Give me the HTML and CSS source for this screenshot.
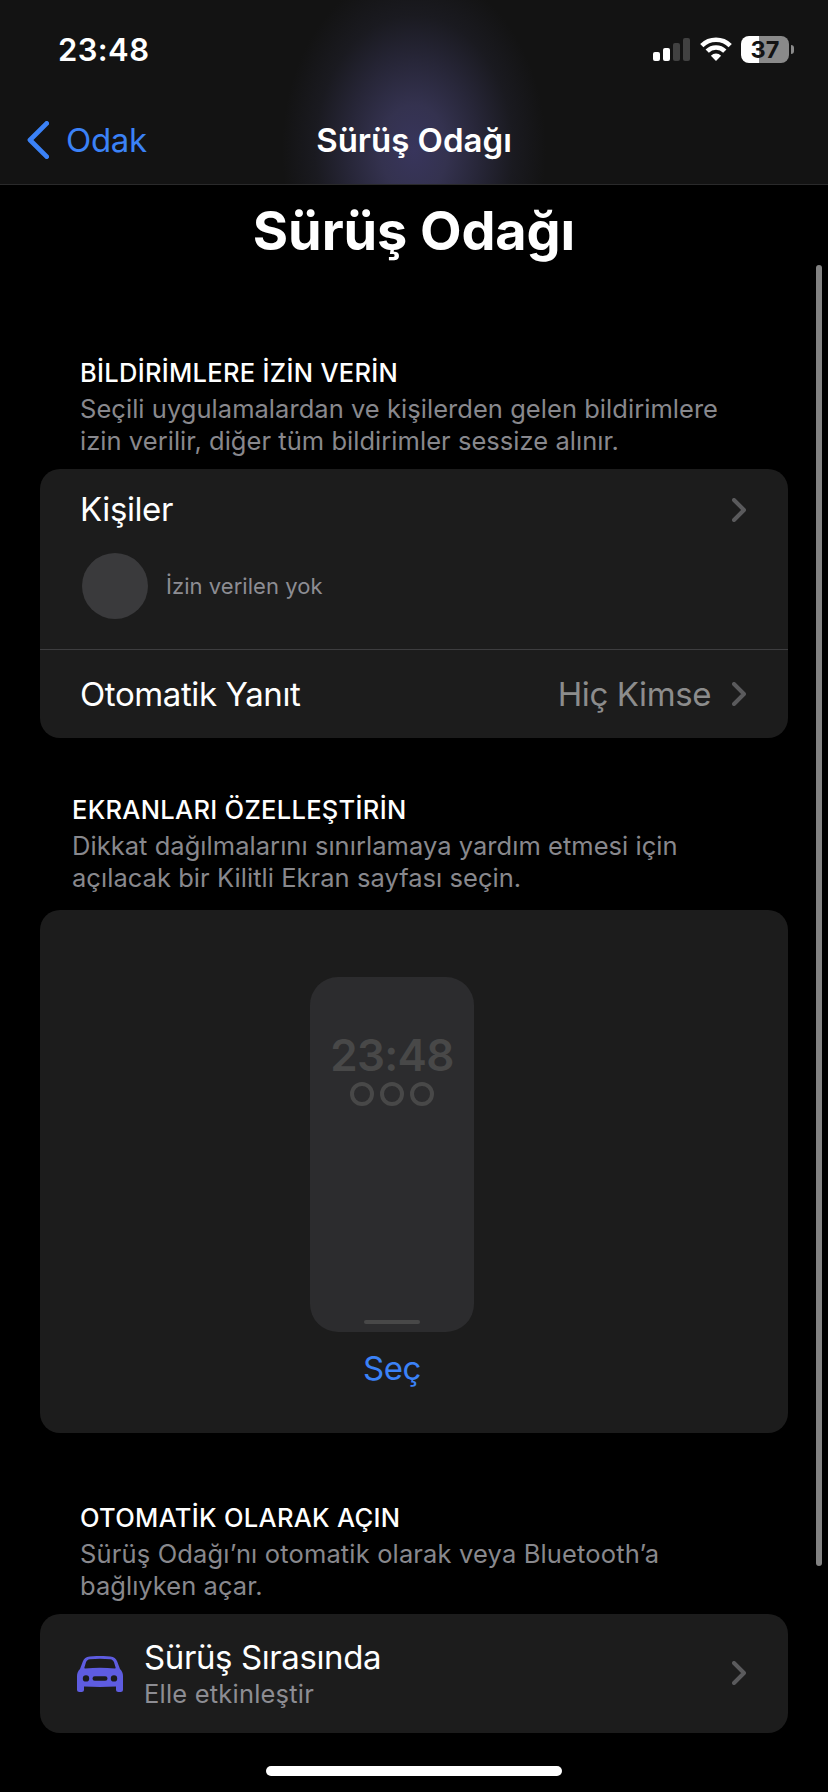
FILE: index.html
```html
<!DOCTYPE html>
<html lang="tr">
<head>
<meta charset="utf-8">
<title>Sürüş Odağı</title>
<link rel="stylesheet" href="styles.css">
</head>
<body>
<header class="topbar">
  <div class="status">
    <span class="time">23:48</span>
    <div class="indicators">
      <svg class="signal" width="38" height="23" viewBox="0 0 38 23">
        <rect x="0" y="14" width="7" height="9" rx="2" fill="#fff"/>
        <rect x="10" y="10" width="7" height="13" rx="2" fill="#fff"/>
        <rect x="20" y="5" width="7" height="18" rx="2" fill="#414141"/>
        <rect x="30" y="0" width="7" height="23" rx="2" fill="#414141"/>
      </svg>
      <svg class="wifi" width="32" height="24" viewBox="0 0 32 24">
        <g fill="none" stroke="#fff" stroke-width="4.6">
          <path d="M1.800 8.600a20.200 20.200 0 0 1 28.400 0"/>
          <path d="M7.200 14.200a12.400 12.400 0 0 1 17.600 0"/>
        </g>
        <path fill="#fff" d="M16 24l-5.100-5.300a7.300 7.300 0 0 1 10.200 0z"/>
      </svg>
      <div class="battery"><span class="level">37</span><span class="cap"></span></div>
    </div>
  </div>
  <nav class="nav">
    <a class="back">
      <svg width="22" height="38" viewBox="0 0 22 38"><path d="M19.700 2.400L3 19l16.700 16.600" fill="none" stroke="#3b82f7" stroke-width="4.8" stroke-linecap="round" stroke-linejoin="round"/></svg>
      <span>Odak</span>
    </a>
    <h2 class="nav-title">Sürüş Odağı</h2>
  </nav>
</header>
<main class="content">
  <h1 class="title">Sürüş Odağı</h1>

  <section class="people">
    <div class="intro">
      <h3>BİLDİRİMLERE İZİN VERİN</h3>
      <p>Seçili uygulamalardan ve kişilerden gelen bildirimlere<br>izin verilir, diğer tüm bildirimler sessize alınır.</p>
    </div>
    <div class="card">
      <div class="contacts">
        <div class="row">
          <span class="label">Kişiler</span>
          <svg class="chevron" width="14" height="24" viewBox="0 0 14 24"><path d="M2 2l10 10L2 22"/></svg>
        </div>
        <div class="allowed"><span class="avatar"></span><span>İzin verilen yok</span></div>
      </div>
      <div class="row reply">
        <span class="label">Otomatik Yanıt</span>
        <span class="value">Hiç Kimse</span>
        <svg class="chevron" width="14" height="24" viewBox="0 0 14 24"><path d="M2 2l10 10L2 22"/></svg>
      </div>
    </div>
  </section>

  <section class="screens">
    <div class="intro">
      <h3>EKRANLARI ÖZELLEŞTİRİN</h3>
      <p>Dikkat dağılmalarını sınırlamaya yardım etmesi için<br>açılacak bir Kilitli Ekran sayfası seçin.</p>
    </div>
    <div class="card preview">
      <div class="phone">
        <span class="clock">23:48</span>
        <div class="widgets"><i></i><i></i><i></i></div>
        <span class="bar"></span>
      </div>
      <a class="choose">Seç</a>
    </div>
  </section>

  <section class="auto">
    <div class="intro">
      <h3>OTOMATİK OLARAK AÇIN</h3>
      <p><span class="wide">Sürüş Odağı’nı otomatik olarak veya Bluetooth’a</span><br>bağlıyken açar.</p>
    </div>
    <div class="card driving">
      <svg class="car" width="46" height="36" viewBox="0 0 46 36">
        <path fill="#5e5ce0" fill-rule="evenodd" d="M12.600.400Q23-.500 33.400.400C37 .700 39 2.500 40.200 5.600L43 13C45 15 46 17.200 46 20V33.500Q46 36 43.500 36H41.500Q39 36 39 33.500V30.600Q23 31.400 7 30.600V33.500Q7 36 4.500 36H2.500Q0 36 0 33.500V20C0 17.200 1 15 3 13L5.800 5.600C7 2.500 9 .700 12.600.400ZM12.800 3.200C10.800 3.400 9.800 4.400 9 6.300L7.400 11.400C7.200 12.200 7.500 12.500 8.200 12.400Q23 11 37.800 12.400C38.500 12.500 38.800 12.200 38.600 11.400L37 6.300C36.200 4.400 35.200 3.400 33.200 3.200Q23 2.400 12.800 3.200ZM9 19.200a3.200 3.200 0 1 0 0 6.400a3.200 3.200 0 1 0 0-6.400ZM37 19.200a3.200 3.200 0 1 0 0 6.400a3.200 3.200 0 1 0 0-6.400ZM17.800 20.200a2.300 2.300 0 0 0 0 4.600h10.400a2.300 2.300 0 0 0 0-4.600Z"/>
      </svg>
      <div class="driving-text">
        <span class="label">Sürüş Sırasında</span>
        <span class="hint">Elle etkinleştir</span>
      </div>
      <svg class="chevron" width="14" height="24" viewBox="0 0 14 24"><path d="M2 2l10 10L2 22"/></svg>
    </div>
  </section>
</main>
<div class="scrollbar"></div>
<div class="home"></div>
</body>
</html>
```
FILE: styles.css
```css
* { box-sizing: border-box; }
body {
  margin: 0;
  width: 828px;
  height: 1792px;
  overflow: hidden;
  position: relative;
  background: #000;
  color: #fff;
  font-family: Inter, "Noto Sans", sans-serif;
}
h1, h2, h3, p { margin: 0; font-weight: 400; }
svg { display: block; flex: none; }

.topbar {
  height: 185px;
  border-bottom: 1px solid #2a2a2b;
  background: radial-gradient(ellipse 132px 180px at 414px 150px, #38355c 0%, #34324f 25%, #272638 50%, #1a1a20 75%, #131313 100%) #131313;
}
.status {
  height: 99px;
  padding: 0 34px 0 58px;
  display: flex;
  justify-content: space-between;
  align-items: center;
}
.time { font-size: 31px; font-weight: 600; line-height: 40px; letter-spacing: 0.4px; }
.indicators { display: flex; align-items: center; }
.signal { margin-right: 9px; }
.wifi { margin: 0 9px 1px 0; }
.battery { display: flex; align-items: center; gap: 2px; }
.level {
  width: 48px;
  height: 27px;
  border-radius: 8px;
  background: linear-gradient(90deg, #fff 18px, #8a8a8a 18px);
  color: #131313;
  font-size: 23.5px;
  font-weight: 700;
  line-height: 27px;
  text-align: center;
}
.cap { width: 3px; height: 9px; border-radius: 0 4px 4px 0; background: #8a8a8a; }
.nav {
  height: 82px;
  padding: 0 27px;
  display: grid;
  grid-template-columns: 1fr auto 1fr;
  align-items: center;
  font-size: 33px;
  line-height: 40px;
}
.back { display: flex; align-items: center; gap: 17px; color: #3b82f7; letter-spacing: -0.3px; }
.nav-title { font-size: 33px; font-weight: 600; }

.content { padding: 16px 40px 0; }
.title { font-size: 54px; font-weight: 700; line-height: 60px; text-align: center; letter-spacing: -0.1px; }
.intro { padding: 0 40px; }
.intro h3 { font-size: 25.5px; line-height: 30px; font-weight: 500; letter-spacing: 0.3px; white-space: nowrap; }
.intro p { margin-top: 5px; font-size: 25.5px; line-height: 32px; letter-spacing: 0.04px; color: #88888d; white-space: nowrap; }
.intro .wide { letter-spacing: 0.15px; }
.card { margin-top: 12px; border-radius: 20px; background: #1c1c1c; overflow: hidden; }
.people { margin-top: 97px; }
.screens { margin-top: 57px; }
.screens .intro { padding: 0 32px; }
.auto { margin-top: 70px; }

.row { display: flex; align-items: center; padding: 0 42px 0 40px; }
.label { flex: 1; font-size: 33px; line-height: 40px; letter-spacing: -0.4px; }
.value { font-size: 33px; line-height: 40px; letter-spacing: -0.4px; margin-right: 21px; color: #8c8c8c; }
.chevron path { fill: none; stroke: #5a5a5c; stroke-width: 4; stroke-linecap: round; stroke-linejoin: round; }
.contacts { height: 181px; padding-top: 20px; border-bottom: 1px solid #3d3d3f; }
.contacts .chevron { margin-top: 2px; }
.allowed {
  margin-top: 24px;
  padding-left: 42px;
  display: flex;
  align-items: center;
  gap: 18px;
  font-size: 22px;
  letter-spacing: 0.05px;
  color: #8d8d93;
}
.avatar { width: 66px; height: 66px; border-radius: 50%; background: #3a3a3c; }
.reply { height: 88px; }

.preview {
  height: 523px;
  margin-top: 16px;
  padding: 67px 44px 0 0;
  display: flex;
  flex-direction: column;
  align-items: center;
}
.phone {
  width: 164px;
  height: 355px;
  padding: 58px 0 8px;
  border-radius: 28px;
  background: #2c2c2e;
  display: flex;
  flex-direction: column;
  align-items: center;
}
.clock { font-size: 44px; font-weight: 600; line-height: 40px; letter-spacing: -0.7px; color: #484848; }
.widgets { display: flex; gap: 6px; margin-top: 7px; }
.widgets i { width: 24px; height: 24px; border: 4px solid #484848; border-radius: 50%; }
.bar { width: 56px; height: 4px; margin-top: auto; border-radius: 2px; background: #484848; }
.choose { margin-top: 16px; font-size: 33px; line-height: 40px; letter-spacing: -0.4px; color: #3b82f7; }

.driving { height: 119px; padding: 0 42px 0 37px; display: flex; align-items: center; }
.driving .car { margin-top: 1px; }
.driving .chevron { margin-bottom: 1px; }
.driving-text { flex: 1; margin-left: 21px; display: flex; flex-direction: column; }
.driving-text .label { flex: none; }
.hint { font-size: 25.5px; line-height: 33px; letter-spacing: 0.2px; color: #8d8d93; }

.scrollbar { position: absolute; left: 816px; top: 265px; width: 6px; height: 1301px; border-radius: 3px; background: #828282; }
.home { position: absolute; left: 266px; top: 1766px; width: 296px; height: 10px; border-radius: 5px; background: #fff; }
```
